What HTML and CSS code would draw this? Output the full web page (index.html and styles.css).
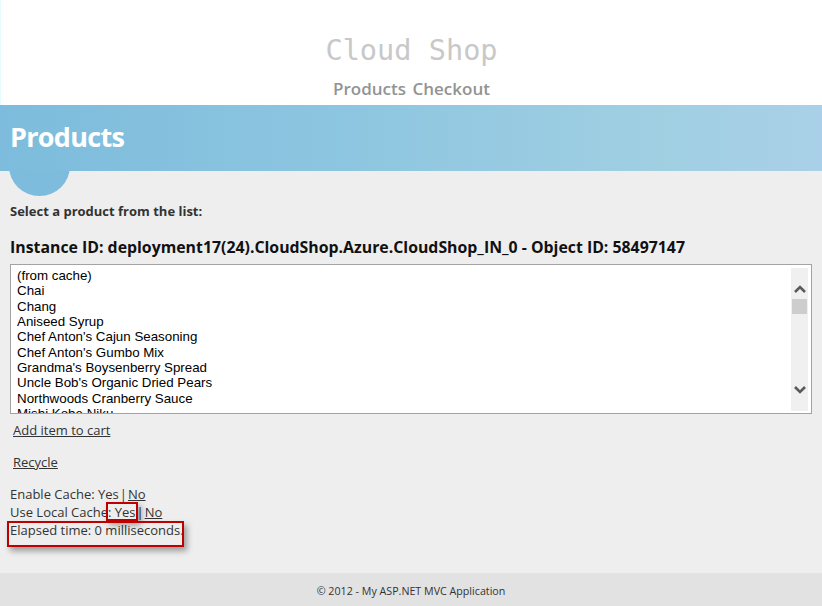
FILE: index.html
```html
<!DOCTYPE html>
<html>
<head>
<meta charset="utf-8">
<title>Cloud Shop</title>
<link rel="stylesheet" href="styles.css">
</head>
<body>
<header class="site-header">
  <div class="site-title">Cloud Shop</div>
  <nav class="menu"><a href="#">Products</a> <a href="#">Checkout</a></nav>
</header>
<section class="band">
  <h1 class="band-title">Products</h1>
</section>
<main class="main">
  <div class="bubble"></div>
  <div class="select-label">Select a product from the list:</div>
  <h2 class="instance">Instance ID: deployment17(24).CloudShop.Azure.CloudShop_IN_0 - Object ID: 58497147</h2>
  <div class="listbox">
    <div class="items">
      <div>(from cache)</div>
      <div>Chai</div>
      <div>Chang</div>
      <div>Aniseed Syrup</div>
      <div>Chef Anton's Cajun Seasoning</div>
      <div>Chef Anton's Gumbo Mix</div>
      <div>Grandma's Boysenberry Spread</div>
      <div>Uncle Bob's Organic Dried Pears</div>
      <div>Northwoods Cranberry Sauce</div>
      <div>Mishi Kobe Niku</div>
    </div>
    <div class="scrollbar">
      <svg class="arrow" width="12" height="8" viewBox="0 0 12 8"><path d="M1 7 L6 2 L11 7" fill="none" stroke="#5a5a5a" stroke-width="2.6"/></svg>
      <div class="thumb"></div>
      <div class="track"></div>
      <svg class="arrow arrow-down" width="12" height="8" viewBox="0 0 12 8"><path d="M1 1 L6 6 L11 1" fill="none" stroke="#5a5a5a" stroke-width="2.6"/></svg>
    </div>
  </div>
  <p class="action"><a href="#">Add item to cart</a></p>
  <p class="action action-second"><a href="#">Recycle</a></p>
  <div class="cache">
    <div>Enable Cache: Yes<span class="sep">|</span><a href="#">No</a></div>
    <div>Use Local Cache: Yes<span class="sep">|</span><a href="#">No</a></div>
    <div>Elapsed time: 0 milliseconds.</div>
    <span class="mark mark-yes"></span>
    <span class="mark mark-elapsed"></span>
  </div>
</main>
<footer class="footer">© 2012 - My ASP.NET MVC Application</footer>
</body>
</html>
```
FILE: styles.css
```css
html, body {
  margin: 0;
  padding: 0;
}
body {
  font-family: "Open Sans", "Noto Sans", sans-serif;
  color: #333;
  background: #fff;
  width: 822px;
  height: 606px;
  overflow: hidden;
}
a {
  color: #333;
}
.site-header {
  height: 105px;
  box-sizing: border-box;
  padding-top: 33px;
  text-align: center;
  background: #fff;
  border-left: 1px solid #e6fbfd;
}
.site-title {
  font-family: "DejaVu Sans Mono", monospace;
  font-size: 28.6px;
  line-height: 34px;
  color: #c8c8c8;
}
.menu {
  margin-top: 11px;
  font-size: 17px;
  line-height: 22px;
  font-weight: 600;
  word-spacing: 2px;
}
.menu a {
  color: #939393;
  text-decoration: none;
}
.band {
  position: relative;
  z-index: 1;
  height: 66px;
  background: linear-gradient(to right, #7dbcdc 0%, #8cc5e0 40%, #a0cfe2 80%, #a9d0e8 100%);
}
.band-title {
  margin: 0;
  padding: 13px 0 0 10px;
  font-size: 27px;
  line-height: 38px;
  font-weight: 700;
  color: #fff;
  letter-spacing: -0.7px;
}
.main {
  position: relative;
  background: #eeeeee;
  height: 402px;
  box-sizing: border-box;
  padding: 31px 10px 0 10px;
}
.bubble {
  position: absolute;
  left: 9px;
  top: -35px;
  width: 61px;
  height: 60px;
  border-radius: 50%;
  background: #7dbcdc;
}
.select-label {
  font-size: 13px;
  line-height: 18px;
  font-weight: 700;
}
.instance {
  margin: 16px 0 0 0;
  font-size: 15.85px;
  line-height: 22px;
  font-weight: 700;
  color: #111;
}
.listbox {
  margin-top: 6px;
  height: 150px;
  box-sizing: border-box;
  border: 1px solid #a3a3a3;
  background: #fff;
  display: flex;
  overflow: hidden;
}
.items {
  flex: 1;
  padding: 3px 0 0 6px;
  font-family: "Liberation Sans", Arial, sans-serif;
  font-size: 13.333px;
  line-height: 15.33px;
  color: #000;
  overflow: hidden;
}
.scrollbar {
  width: 17px;
  margin: 3px 3px 2px 0;
  background: #f0f0f0;
  display: flex;
  flex-direction: column;
  align-items: center;
}
.arrow {
  display: block;
  margin-top: 17px;
}
.thumb {
  margin-top: 6px;
  width: 15px;
  height: 15px;
  background: #cdcdcd;
}
.track {
  flex: 1;
}
.arrow-down {
  margin-top: 0;
  margin-bottom: 17px;
}
.action {
  margin: 7px 0 0 3px;
  font-size: 13px;
  line-height: 18px;
}
.action-second {
  margin-top: 14px;
}
.cache {
  position: relative;
  margin-top: 14px;
  font-size: 13px;
  line-height: 18px;
}
.sep {
  margin: 0 1px 0 1px;
}
.mark {
  position: absolute;
  border: 2px solid #c00000;
  box-shadow: 3px 4px 6px rgba(0, 0, 0, 0.35);
}
.mark-yes {
  left: 96px;
  top: 17px;
  width: 28px;
  height: 15px;
}
.mark-elapsed {
  left: -3px;
  top: 36px;
  width: 173px;
  height: 22px;
}
.footer {
  height: 33px;
  background: #e2e2e2;
  text-align: center;
  font-size: 10.7px;
  line-height: 36px;
  color: #333;
}
```
